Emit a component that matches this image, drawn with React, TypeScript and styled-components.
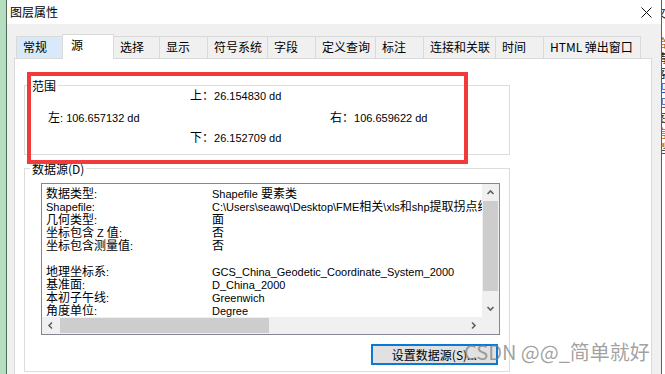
import React from 'react';
import styled, { createGlobalStyle } from 'styled-components';

const GlobalStyle = createGlobalStyle`
  html, body {
    margin: 0;
    padding: 0;
    background: #fff;
  }
  body {
    font-family: "Noto Sans CJK SC", "Liberation Sans", sans-serif;
    font-size: 12px;
    color: #000;
  }
`;

const Screen = styled.div`
  position: relative;
  display: flex;
  width: 665px;
  height: 374px;
  overflow: hidden;
  background: #fff;
`;

const DesktopStrip = styled.div`
  flex-shrink: 0;
  width: 6px;
  background: #b6dec0;
  border-right: 1px solid #4e6d56;
`;

const Window = styled.div`
  flex-shrink: 0;
  width: 654px;
  display: flex;
  flex-direction: column;
  background: #f0f0f0;
`;

const TitleBar = styled.div`
  height: 24px;
  flex-shrink: 0;
  display: flex;
  align-items: center;
  justify-content: space-between;
  padding-left: 3px;
  background: #fff;
`;

const Title = styled.span`
  line-height: 14px;
`;

const CloseButton = styled.div`
  width: 30px;
  height: 24px;
  display: flex;
  align-items: center;
  justify-content: center;
`;

const Body = styled.div`
  flex: 1;
  padding: 10px 9px 0 7px;
`;

const TabRow = styled.div`
  height: 24px;
  display: flex;
  align-items: flex-end;
  padding-left: 3px;
`;

const Tab = styled.div<{ $w: number; $active?: boolean; $hover?: boolean }>`
  position: relative;
  z-index: ${p => (p.$active ? 2 : 1)};
  box-sizing: border-box;
  width: ${p => p.$w}px;
  height: ${p => (p.$active ? 25 : 22)}px;
  margin-left: -1px;
  margin-bottom: ${p => (p.$active ? -1 : 0)}px;
  padding: 3px 0 0 ${p => (p.$active ? 8 : 6)}px;
  border: 1px solid #d9d9d9;
  border-bottom: none;
  background: ${p => (p.$active ? '#fff' : p.$hover ? '#d8eaf9' : '#f0f0f0')};
  line-height: 14px;
  white-space: nowrap;
`;

const Panel = styled.div`
  position: relative;
  box-sizing: border-box;
  height: 330px;
  padding: 18px 0 0 9px;
  background: #fff;
  border: 1px solid #d9d9d9;
`;

const GroupBox = styled.fieldset<{ $gap?: number }>`
  box-sizing: border-box;
  width: 486px;
  min-width: 0;
  margin: ${p => p.$gap ?? 0}px 0 0 0;
  padding: 0;
  border: 1px solid #dcdcdc;
`;

const GroupLabel = styled.legend`
  margin-left: 5px;
  padding: 2px 2px 0;
  line-height: 14px;
`;

const RangeGrid = styled.div`
  display: grid;
  grid-template-columns: 142px 140px 1fr;
  grid-template-rows: 22px 20px 20px;
  margin-top: -8px;
  padding: 0 0 7px 23px;
  line-height: 20px;
`;

const RangeItem = styled.div<{ $col: number; $row: number }>`
  grid-column: ${p => p.$col};
  grid-row: ${p => p.$row};
  white-space: nowrap;
`;

const Latin = styled.span`
  font-family: "Liberation Sans", sans-serif;
  font-size: 11px;
`;

const ListBox = styled.div`
  box-sizing: border-box;
  width: 459px;
  height: 152px;
  margin: 7px 0 0 16px;
  border: 1px solid #828790;
  display: grid;
  grid-template-columns: 440px 17px;
  grid-template-rows: 133px 17px;
`;

const ListView = styled.div`
  overflow: hidden;
  padding: 2px 0 0 4px;
`;

const InfoRow = styled.div`
  display: flex;
  height: 13px;
  line-height: 13px;
  white-space: nowrap;
`;

const InfoKey = styled.span`
  flex-shrink: 0;
  width: 166px;
`;

const InfoValue = styled.span``;

const VScroll = styled.div`
  display: grid;
  grid-template-rows: 17px 1fr 17px;
  background: #f0f0f0;
`;

const HScroll = styled.div`
  display: grid;
  grid-template-columns: 17px 1fr 17px;
  background: #f0f0f0;
`;

const ArrowCell = styled.div`
  display: flex;
  align-items: center;
  justify-content: center;
`;

const VTrack = styled.div`
  padding: 0 1px;
`;

const VThumb = styled.div`
  height: 90px;
  background: #cdcdcd;
`;

const HTrack = styled.div`
  padding: 1px 0 1px 1px;
`;

const HThumb = styled.div`
  width: 209px;
  height: 100%;
  background: #cdcdcd;
`;

const Corner = styled.div`
  background: #f0f0f0;
`;

const ButtonRow = styled.div`
  display: flex;
  justify-content: flex-end;
  margin-top: 9px;
  padding: 0 11px 6px 0;
`;

const PushButton = styled.div`
  box-sizing: border-box;
  width: 127px;
  height: 21px;
  display: flex;
  align-items: center;
  justify-content: center;
  border: 2px solid #0a78d6;
  background: #e1e1e1;
  line-height: 14px;
`;

const Highlight = styled.div`
  position: absolute;
  left: 12px;
  top: 13px;
  box-sizing: border-box;
  width: 441px;
  height: 92px;
  border: 4px solid #f23a3b;
  pointer-events: none;
`;

const NeighborWindow = styled.div`
  flex: 1;
  overflow: hidden;
  padding-top: 5px;
  border-left: 1px solid #5f5f5f;
  background: #fff;
`;

const Fragment = styled.div<{ $c: string }>`
  margin-left: -7px;
  height: 15px;
  line-height: 15px;
  color: ${p => p.$c};
  white-space: nowrap;
`;

const Watermark = styled.div`
  position: absolute;
  left: 464px;
  top: 341px;
  font-size: 20px;
  line-height: 22px;
  color: rgba(125, 125, 125, 0.72);
  white-space: nowrap;
  pointer-events: none;
`;

const tabs = [
  { label: '常规', w: 47, hover: true },
  { label: '源', w: 52, active: true },
  { label: '选择', w: 47 },
  { label: '显示', w: 49 },
  { label: '符号系统', w: 61 },
  { label: '字段', w: 49 },
  { label: '定义查询', w: 61 },
  { label: '标注', w: 49 },
  { label: '连接和关联', w: 73 },
  { label: '时间', w: 49 },
  { label: 'HTML 弹出窗口', w: 98 },
];

const info: [string, string][] = [
  ['数据类型:', 'Shapefile 要素类'],
  ['Shapefile:', 'C:\\Users\\seawq\\Desktop\\FME相关\\xls和shp提取拐点线\\拐点.shp'],
  ['几何类型:', '面'],
  ['坐标包含 Z 值:', '否'],
  ['坐标包含测量值:', '否'],
  ['', ''],
  ['地理坐标系:', 'GCS_China_Geodetic_Coordinate_System_2000'],
  ['基准面:', 'D_China_2000'],
  ['本初子午线:', 'Greenwich'],
  ['角度单位:', 'Degree'],
  ['', ''],
];

const fragments: [string, string][] = [
  ['文', '#1b1b1b'],
  [':', '#2458b8'],
  ['给', '#b2600f'],
  ['请', '#1b1b1b'],
  ['客', '#1b1b1b'],
  ['四', '#2458b8'],
  ['四', '#2458b8'],
  ['图', '#1b1b1b'],
  ['信', '#b2600f'],
  ['型', '#1b1b1b'],
  ['', '#1b1b1b'],
  ['', '#1b1b1b'],
  ['', '#1b1b1b'],
  ['', '#1b1b1b'],
  ['', '#1b1b1b'],
  ['', '#1b1b1b'],
  ['c', '#b2600f'],
  ['g', '#1b1b1b'],
];

// ASCII runs use the narrow UI font, CJK stays in the CJK face
const mixed = (text: string) =>
  text.split(/([\x20-\x7e]+)/).map((part, i) =>
    /^[\x20-\x7e]+$/.test(part) ? <Latin key={i}>{part}</Latin> : part,
  );

const Chevron: React.FC<{ dir: 'up' | 'down' | 'left' | 'right' }> = ({ dir }) => {
  const rot = { up: 0, right: 90, down: 180, left: 270 }[dir];
  return (
    <svg width="9" height="9" viewBox="0 0 9 9">
      <polyline
        points="1.5,6 4.5,3 7.5,6"
        fill="none"
        stroke="#606060"
        strokeWidth="1.6"
        transform={`rotate(${rot} 4.5 4.5)`}
      />
    </svg>
  );
};

const App: React.FC = () => {
  return (
    <>
      <GlobalStyle />
      <Screen>
        <DesktopStrip />
        <Window>
          <TitleBar>
            <Title>图层属性</Title>
            <CloseButton>
              <svg width="11" height="11" viewBox="0 0 11 11">
                <path d="M0.5 0.5 L10.5 10.5 M10.5 0.5 L0.5 10.5" stroke="#111" strokeWidth="1" />
              </svg>
            </CloseButton>
          </TitleBar>
          <Body>
            <TabRow>
              {tabs.map(t => (
                <Tab key={t.label} $w={t.w} $active={t.active} $hover={t.hover}>
                  {t.label}
                </Tab>
              ))}
            </TabRow>
            <Panel>
              <GroupBox>
                <GroupLabel>范围</GroupLabel>
                <RangeGrid>
                  <RangeItem $col={2} $row={1}>上：<Latin>26.154830 dd</Latin></RangeItem>
                  <RangeItem $col={1} $row={2}>左<Latin>: 106.657132 dd</Latin></RangeItem>
                  <RangeItem $col={3} $row={2}>右：<Latin>106.659622 dd</Latin></RangeItem>
                  <RangeItem $col={2} $row={3}>下：<Latin>26.152709 dd</Latin></RangeItem>
                </RangeGrid>
              </GroupBox>
              <GroupBox $gap={5}>
                <GroupLabel>数据源(D)</GroupLabel>
                <ListBox>
                  <ListView>
                    {info.map(([k, v], i) => (
                      <InfoRow key={i}>
                        <InfoKey>{mixed(k)}</InfoKey>
                        <InfoValue>{mixed(v)}</InfoValue>
                      </InfoRow>
                    ))}
                  </ListView>
                  <VScroll>
                    <ArrowCell><Chevron dir="up" /></ArrowCell>
                    <VTrack><VThumb /></VTrack>
                    <ArrowCell><Chevron dir="down" /></ArrowCell>
                  </VScroll>
                  <HScroll>
                    <ArrowCell><Chevron dir="left" /></ArrowCell>
                    <HTrack><HThumb /></HTrack>
                    <ArrowCell><Chevron dir="right" /></ArrowCell>
                  </HScroll>
                  <Corner />
                </ListBox>
                <ButtonRow>
                  <PushButton>设置数据源(S)...</PushButton>
                </ButtonRow>
              </GroupBox>
              <Highlight />
            </Panel>
          </Body>
        </Window>
        <NeighborWindow>
          {fragments.map(([ch, c], i) => (
            <Fragment key={i} $c={c}>{ch}</Fragment>
          ))}
        </NeighborWindow>
        <Watermark>CSDN @@_简单就好</Watermark>
      </Screen>
    </>
  );
};

export default App;
